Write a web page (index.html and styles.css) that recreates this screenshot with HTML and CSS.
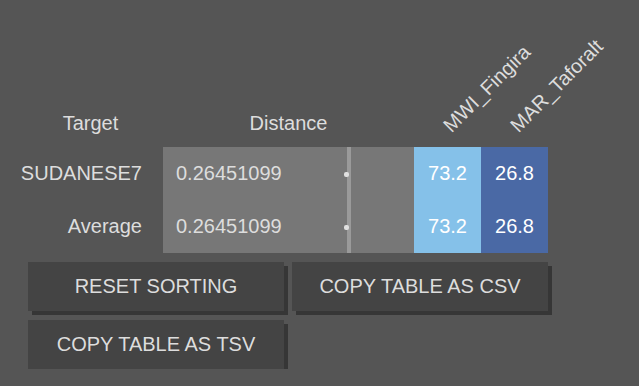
FILE: index.html
```html
<!DOCTYPE html>
<html lang="en">
<head>
    <meta charset="UTF-8">
    <meta name="viewport" content="width=device-width, initial-scale=1.0">
    <title>Distance Table</title>
    <link rel="stylesheet" href="styles.css">
</head>
<body>

    <div class="page">
        <!-- Results table -->
        <div class="results">
            <div class="head">Target</div>
            <div class="head">Distance</div>
            <div class="head rotated"><span>MWI_Fingira</span></div>
            <div class="head rotated"><span>MAR_Taforalt</span></div>

            <div class="label">SUDANESE7</div>
            <div class="dist">0.26451099<span class="dot"></span></div>
            <div class="pct light">73.2</div>
            <div class="pct dark">26.8</div>

            <div class="label">Average</div>
            <div class="dist">0.26451099<span class="dot"></span></div>
            <div class="pct light">73.2</div>
            <div class="pct dark">26.8</div>
        </div>

        <div class="actions">
            <button>RESET SORTING</button>
            <button>COPY TABLE AS CSV</button>
            <button>COPY TABLE AS TSV</button>
        </div>
    </div>

</body>
</html>
```

FILE: styles.css
```css
body {
    margin: 0;
    padding: 0;
    background: #555555;
    font-family: "Liberation Sans", Arial, sans-serif;
    font-size: 20px;
    color: #dddddd;
}
.page {
    padding: 100px 0 0 18px;
}
.results {
    display: grid;
    grid-template-columns: 145px 251px 67px 67px;
    grid-template-rows: 47px 53px 53px;
}
.head {
    display: flex;
    align-items: center;
    justify-content: center;
}
.head.rotated {
    justify-content: flex-start;
    align-items: flex-end;
    padding: 0 0 10px 41px;
}
.head.rotated span {
    display: block;
    white-space: nowrap;
    transform-origin: 0 100%;
    transform: rotate(-45deg);
}
.label {
    display: flex;
    align-items: center;
    justify-content: flex-end;
    padding-right: 21px;
}
.dist {
    position: relative;
    display: flex;
    align-items: center;
    padding-left: 13px;
    background: linear-gradient(to right, #777777 184px, #9a9a9a 184px, #9a9a9a 188px, #777777 188px);
}
.dot {
    position: absolute;
    left: 181px;
    top: 25px;
    width: 5px;
    height: 5px;
    border-radius: 2px;
    background: #e0e0e0;
}
.pct {
    display: flex;
    align-items: center;
    justify-content: center;
    color: #ffffff;
}
.pct.light {
    background: #85c1e9;
}
.pct.dark {
    background: #4a69a5;
}
.actions {
    display: grid;
    grid-template-columns: 256px 256px;
    gap: 9px 8px;
    margin: 9px 0 0 10px;
}
.actions button {
    height: 49px;
    padding: 0;
    border: none;
    background: #444444;
    box-shadow: 4px 4px 0 #363636;
    color: #dddddd;
    font-family: "Liberation Sans", Arial, sans-serif;
    font-size: 20px;
    cursor: pointer;
}
```
